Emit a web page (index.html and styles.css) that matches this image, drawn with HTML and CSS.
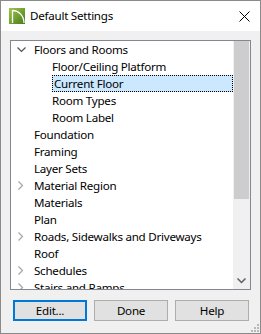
FILE: index.html
```html
<!DOCTYPE html>
<html lang="en">
<head>
  <meta charset="UTF-8" />
  <title>Default Settings</title>
  <link rel="stylesheet" href="styles.css">
</head>
<body>
  <div class="window">
    <div class="titlebar">
      <svg class="app-icon" width="16" height="16" viewBox="0 0 16 16">
        <defs>
          <linearGradient id="g" x1="0" y1="0" x2="1" y2="1">
            <stop offset="0" stop-color="#9cc84a" />
            <stop offset="1" stop-color="#4a7a1c" />
          </linearGradient>
        </defs>
        <rect width="16" height="16" fill="url(#g)" />
        <path d="M3.5 2 V15 M3.5 2.5 A11.5 12.5 0 0 1 15 15" fill="none" stroke="#fff" stroke-width="1.3" />
      </svg>
      <span class="title">Default Settings</span>
      <svg class="close" width="11" height="11" viewBox="0 0 11 11">
        <path d="M0.5 0.5 L10.5 10.5 M10.5 0.5 L0.5 10.5" stroke="#000" stroke-width="1" />
      </svg>
    </div>
    <div class="content">
      <div class="tree">
        <ul class="items">
          <li class="row"><span class="arrow down"><svg width="9" height="6" viewBox="0 0 9 6"><path d="M0.5 0.5 L4.5 4.5 L8.5 0.5" fill="none" stroke="#555" stroke-width="1.2"/></svg></span>Floors and Rooms</li>
          <li class="row child">Floor/Ceiling Platform</li>
          <li class="row child"><span class="selected">Current Floor</span></li>
          <li class="row child">Room Types</li>
          <li class="row child">Room Label</li>
          <li class="row"><span class="arrow"></span>Foundation</li>
          <li class="row"><span class="arrow"></span>Framing</li>
          <li class="row"><span class="arrow"></span>Layer Sets</li>
          <li class="row"><span class="arrow right"><svg width="6" height="9" viewBox="0 0 6 9"><path d="M0.5 0.5 L4.5 4.5 L0.5 8.5" fill="none" stroke="#a6a6a6" stroke-width="1.2"/></svg></span>Material Region</li>
          <li class="row"><span class="arrow"></span>Materials</li>
          <li class="row"><span class="arrow"></span>Plan</li>
          <li class="row"><span class="arrow right"><svg width="6" height="9" viewBox="0 0 6 9"><path d="M0.5 0.5 L4.5 4.5 L0.5 8.5" fill="none" stroke="#a6a6a6" stroke-width="1.2"/></svg></span>Roads, Sidewalks and Driveways</li>
          <li class="row"><span class="arrow"></span>Roof</li>
          <li class="row"><span class="arrow right"><svg width="6" height="9" viewBox="0 0 6 9"><path d="M0.5 0.5 L4.5 4.5 L0.5 8.5" fill="none" stroke="#a6a6a6" stroke-width="1.2"/></svg></span>Schedules</li>
          <li class="row"><span class="arrow right"><svg width="6" height="9" viewBox="0 0 6 9"><path d="M0.5 0.5 L4.5 4.5 L0.5 8.5" fill="none" stroke="#a6a6a6" stroke-width="1.2"/></svg></span>Stairs and Ramps</li>
        </ul>
        <div class="scrollbar">
          <div class="thumb"></div>
          <div class="track"></div>
          <div class="down-btn"><svg width="9" height="6" viewBox="0 0 9 6"><path d="M0.5 0.5 L4.5 4.5 L8.5 0.5" fill="none" stroke="#606060" stroke-width="1.5"/></svg></div>
        </div>
      </div>
      <div class="buttons">
        <button class="btn default">Edit...</button>
        <button class="btn">Done</button>
        <button class="btn">Help</button>
      </div>
    </div>
    <svg class="grip" width="9" height="9" viewBox="0 0 9 9">
      <rect x="7" y="1" width="2" height="2" fill="#b8b8b8"/>
      <rect x="4" y="4" width="2" height="2" fill="#b8b8b8"/>
      <rect x="7" y="4" width="2" height="2" fill="#b8b8b8"/>
      <rect x="1" y="7" width="2" height="2" fill="#b8b8b8"/>
      <rect x="4" y="7" width="2" height="2" fill="#b8b8b8"/>
      <rect x="7" y="7" width="2" height="2" fill="#b8b8b8"/>
    </svg>
  </div>
</body>
</html>
```

FILE: styles.css
```css
body {
  margin: 0;
  font-family: "Noto Sans", "Open Sans", sans-serif;
  font-size: 11.6px;
  letter-spacing: -0.25px;
  color: #000;
}
.window {
  position: relative;
  width: 261px;
  height: 334px;
  box-sizing: border-box;
  border: 1px solid #8a8a8a;
  background-color: #f0f0f0;
  display: flex;
  flex-direction: column;
}
.titlebar {
  height: 30px;
  background-color: #fff;
  display: flex;
  align-items: center;
  padding-left: 8px;
}
.app-icon {
  margin-top: -1px;
}
.title {
  margin-left: 5px;
  flex: 1;
  margin-top: -1px;
}
.close {
  margin-right: 10px;
  margin-top: 1px;
}
.content {
  padding: 9px 9px 0 9px;
}
.tree {
  height: 250px;
  box-sizing: border-box;
  border: 1px solid #828790;
  background-color: #fff;
  display: flex;
  overflow: hidden;
}
.items {
  list-style: none;
  margin: 0;
  padding: 0;
  flex: 1;
}
.row {
  height: 17px;
  line-height: 17px;
  display: flex;
  align-items: center;
  padding-left: 4px;
  white-space: nowrap;
}
.row.child {
  padding-left: 41px;
}
.arrow {
  width: 19px;
  display: flex;
  align-items: center;
  padding-left: 2px;
  box-sizing: border-box;
}
.arrow.right {
  padding-left: 3px;
}
.selected {
  flex: 1;
  height: 17px;
  line-height: 15px;
  box-sizing: border-box;
  padding-left: 1px;
  background-color: #cce8ff;
  border: 1px dotted #000;
}
.scrollbar {
  width: 17px;
  background-color: #f0f0f0;
  display: flex;
  flex-direction: column;
}
.thumb {
  height: 158px;
  margin: 0 1px;
  background-color: #cdcdcd;
}
.track {
  flex: 1;
}
.down-btn {
  height: 17px;
  display: flex;
  align-items: center;
  justify-content: center;
}
.buttons {
  display: flex;
  gap: 7px;
  margin-top: 10px;
  padding-left: 3px;
}
.btn {
  width: 74px;
  height: 21px;
  box-sizing: border-box;
  border: 1px solid #adadad;
  background-color: #e1e1e1;
  font-family: inherit;
  font-size: inherit;
  letter-spacing: inherit;
  color: #000;
  padding: 0;
}
.btn.default {
  border: 2px solid #0078d7;
}
.grip {
  position: absolute;
  right: 1px;
  bottom: 1px;
}
```
